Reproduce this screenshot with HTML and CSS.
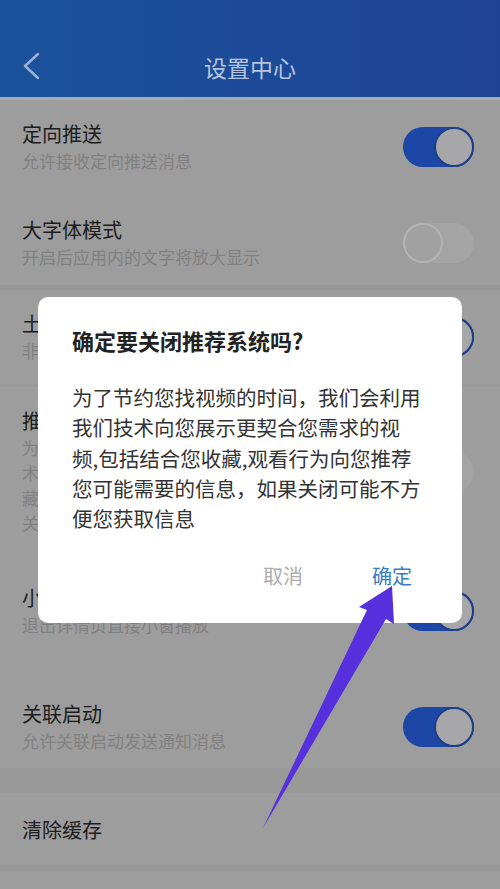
FILE: index.html
```html
<!DOCTYPE html>
<html lang="zh-CN">
<head>
    <meta charset="UTF-8">
    <meta name="viewport" content="width=device-width, initial-scale=1.0">
    <title>设置中心</title>
    <link rel="stylesheet" href="styles.css">
</head>
<body>

<div class="page">
    <div class="header">
        <svg class="back" width="20" height="28" viewBox="0 0 20 28">
            <polyline points="16,2 3,14 16,26" fill="none" stroke="#9cb3d6" stroke-width="2.4" stroke-linecap="round" stroke-linejoin="round"/>
        </svg>
        <h1 class="header-title">设置中心</h1>
    </div>

    <div class="list">
        <div class="row row-first">
            <div class="row-text">
                <div class="row-title">定向推送</div>
                <div class="row-sub">允许接收定向推送消息</div>
            </div>
            <span class="switch on"></span>
        </div>

        <div class="row row-second">
            <div class="row-text">
                <div class="row-title">大字体模式</div>
                <div class="row-sub">开启后应用内的文字将放大显示</div>
            </div>
            <span class="switch"></span>
        </div>

        <div class="row row-third">
            <div class="row-text">
                <div class="row-title">土豪模式</div>
                <div class="row-sub">非WiFi环境下自动播放视频</div>
            </div>
            <span class="switch on"></span>
        </div>

        <div class="row row-fourth">
            <div class="row-text">
                <div class="row-title">推荐系统</div>
                <div class="row-sub">为了节约您找视频的时间<br>术向您展示更契合的视频<br>藏,观看行为向您推荐<br>关闭后将不再为您推荐</div>
            </div>
            <span class="switch"></span>
        </div>

        <div class="row row-fifth">
            <div class="row-text">
                <div class="row-title">小窗播放</div>
                <div class="row-sub">退出详情页直接小窗播放</div>
            </div>
            <span class="switch on"></span>
        </div>

        <div class="row row-sixth">
            <div class="row-text">
                <div class="row-title">关联启动</div>
                <div class="row-sub">允许关联启动发送通知消息</div>
            </div>
            <span class="switch on"></span>
        </div>

        <div class="row row-last">
            <div class="row-text">
                <div class="row-title">清除缓存</div>
            </div>
        </div>
    </div>

    <div class="dialog">
        <div class="dialog-title">确定要关闭推荐系统吗?</div>
        <p class="dialog-body">为了节约您找视频的时间，我们会利用我们技术向您展示更契合您需求的视频,包括结合您收藏,观看行为向您推荐您可能需要的信息，如果关闭可能不方便您获取信息</p>
        <div class="dialog-actions">
            <button class="dialog-btn cancel">取消</button>
            <button class="dialog-btn confirm">确定</button>
        </div>
    </div>

    <svg class="arrow" width="500" height="889" viewBox="0 0 500 889">
        <polygon points="392,586 359,607 367,610 263,828 386,619 394,624" fill="#5530dc"/>
    </svg>
</div>

</body>
</html>
```

FILE: styles.css
```css
body {
    margin: 0;
    font-family: "Noto Sans CJK SC", "Noto Sans", sans-serif;
    background-color: #9d9d9d;
}

.page {
    position: relative;
    width: 500px;
    height: 889px;
    overflow: hidden;
    background-color: #9d9d9d;
}

.header {
    height: 61px;
    padding-top: 36px;
    display: flex;
    align-items: center;
    justify-content: center;
    position: relative;
    background: linear-gradient(90deg, #1b529b, #1d4797 70%, #1e4394);
    border-bottom: 3px solid #a3adb8;
}

.back {
    position: absolute;
    left: 22px;
    top: 52px;
}

.header-title {
    margin: 0;
    font-size: 23px;
    font-weight: normal;
    color: #b4c4de;
}

.list {
    display: flex;
    flex-direction: column;
}

.row {
    display: flex;
    align-items: center;
    justify-content: space-between;
    padding: 21px 26px 21px 22px;
}

.row-second {
    padding-top: 23px;
    padding-bottom: 16px;
    border-bottom: 5px solid #979797;
}

.row-third {
    border-bottom: 3px solid #999;
}

.row-fourth {
    padding-bottom: 25px;
}

.row-fifth {
    padding-top: 25px;
    padding-bottom: 43px;
}

.row-sixth {
    padding-bottom: 15px;
    border-bottom: 25px solid #999;
}

.row-last {
    padding-top: 24px;
    padding-bottom: 22px;
    border-bottom: 6px solid #979797;
}

.row-title {
    font-size: 20px;
    line-height: 26px;
    color: #1c1c1c;
}

.row-sub {
    margin-top: 1px;
    font-size: 17px;
    line-height: 25px;
    color: #818181;
}

.switch {
    width: 71px;
    height: 40px;
    border-radius: 20px;
    background-color: #a4a4a4;
    position: relative;
    flex-shrink: 0;
}

.switch::after {
    content: "";
    position: absolute;
    left: 0;
    top: 0;
    width: 36px;
    height: 36px;
    border-radius: 50%;
    background-color: #a1a1a1;
    border: 2px solid #b3b3b3;
}

.switch.on {
    background-color: #1c47a6;
}

.switch.on::after {
    left: auto;
    right: 0;
    background-color: #a7a7a9;
    border-color: #1d3f88;
}

.dialog {
    position: absolute;
    left: 38px;
    top: 297px;
    box-sizing: border-box;
    width: 424px;
    height: 326px;
    padding: 29px 40px 0 34px;
    background-color: #fff;
    border-radius: 10px;
}

.dialog-title {
    font-size: 22px;
    line-height: 28px;
    font-weight: bold;
    color: #222;
}

.dialog-body {
    margin: 28px 0 0;
    font-size: 20.5px;
    line-height: 30.3px;
    color: #333;
}

.dialog-actions {
    display: flex;
    justify-content: flex-end;
    gap: 69px;
    margin-top: 29px;
    padding-right: 10px;
}

.dialog-btn {
    padding: 0;
    border: none;
    background: none;
    font-family: inherit;
    font-size: 20px;
    line-height: 28px;
    cursor: pointer;
}

.dialog-btn.cancel {
    color: #acacac;
}

.dialog-btn.confirm {
    color: #3b7cc4;
}

.arrow {
    position: absolute;
    left: 0;
    top: 0;
    pointer-events: none;
}
```
